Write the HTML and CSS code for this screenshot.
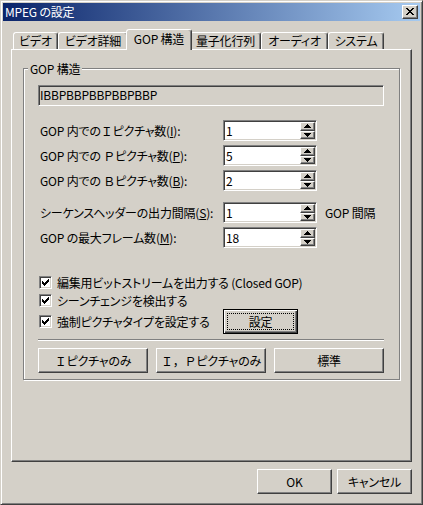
FILE: index.html
```html
<!DOCTYPE html>
<html lang="ja">
<head>
    <meta charset="UTF-8">
    <title>MPEG の設定</title>
    <link rel="stylesheet" href="styles.css">
</head>
<body>
<div class="window">
    <div class="titlebar">
        <span class="title">MPEG の設定</span>
        <span class="close-btn">
            <svg width="8" height="7" viewBox="0 0 8 7" shape-rendering="crispEdges"><path d="M0 0h2v1H0z M6 0h2v1H6z M1 1h2v1H1z M5 1h2v1H5z M2 2h4v1H2z M3 3h2v1H3z M2 4h4v1H2z M1 5h2v1H1z M5 5h2v1H5z M0 6h2v1H0z M6 6h2v1H6z"/></svg>
        </span>
    </div>

    <div class="client">
        <div class="tabs">
            <div class="tab tab-video">ビデオ</div>
            <div class="tab tab-detail">ビデオ詳細</div>
            <div class="tab tab-gop active">GOP 構造</div>
            <div class="tab tab-matrix">量子化行列</div>
            <div class="tab tab-audio">オーディオ</div>
            <div class="tab tab-system">システム</div>
        </div>

        <div class="panel">
            <fieldset class="group">
                <legend>GOP 構造</legend>
                <div class="readonly">IBBPBBPBBPBBPBBP</div>

                <div class="spin-rows">
                    <div class="spin-row">
                        <label>GOP 内での<span class="fw">Ｉ</span>ピクチャ数(<u>I</u>):</label>
                        <div class="spin">
                            <span class="spin-value">1</span>
                            <div class="spin-btns">
                                <span class="arrow"><svg width="7" height="4" viewBox="0 0 7 4" shape-rendering="crispEdges"><path d="M3 0h1v1h1v1h1v1h1v1H0V3h1V2h1V1h1z"/></svg></span>
                                <span class="arrow"><svg width="7" height="4" viewBox="0 0 7 4" shape-rendering="crispEdges"><path d="M0 0h7v1H6v1H5v1H4v1H3V3H2V2H1V1H0z"/></svg></span>
                            </div>
                        </div>
                    </div>
                    <div class="spin-row">
                        <label>GOP 内での <span class="fw">Ｐ</span>ピクチャ数(<u>P</u>):</label>
                        <div class="spin">
                            <span class="spin-value">5</span>
                            <div class="spin-btns">
                                <span class="arrow"><svg width="7" height="4" viewBox="0 0 7 4" shape-rendering="crispEdges"><path d="M3 0h1v1h1v1h1v1h1v1H0V3h1V2h1V1h1z"/></svg></span>
                                <span class="arrow"><svg width="7" height="4" viewBox="0 0 7 4" shape-rendering="crispEdges"><path d="M0 0h7v1H6v1H5v1H4v1H3V3H2V2H1V1H0z"/></svg></span>
                            </div>
                        </div>
                    </div>
                    <div class="spin-row">
                        <label>GOP 内での <span class="fw">Ｂ</span>ピクチャ数(<u>B</u>):</label>
                        <div class="spin">
                            <span class="spin-value">2</span>
                            <div class="spin-btns">
                                <span class="arrow"><svg width="7" height="4" viewBox="0 0 7 4" shape-rendering="crispEdges"><path d="M3 0h1v1h1v1h1v1h1v1H0V3h1V2h1V1h1z"/></svg></span>
                                <span class="arrow"><svg width="7" height="4" viewBox="0 0 7 4" shape-rendering="crispEdges"><path d="M0 0h7v1H6v1H5v1H4v1H3V3H2V2H1V1H0z"/></svg></span>
                            </div>
                        </div>
                    </div>
                </div>

                <div class="spin-rows spin-rows-lower">
                    <div class="spin-row">
                        <label>シーケンスヘッダーの出力間隔(<u>S</u>):</label>
                        <div class="spin">
                            <span class="spin-value">1</span>
                            <div class="spin-btns">
                                <span class="arrow"><svg width="7" height="4" viewBox="0 0 7 4" shape-rendering="crispEdges"><path d="M3 0h1v1h1v1h1v1h1v1H0V3h1V2h1V1h1z"/></svg></span>
                                <span class="arrow"><svg width="7" height="4" viewBox="0 0 7 4" shape-rendering="crispEdges"><path d="M0 0h7v1H6v1H5v1H4v1H3V3H2V2H1V1H0z"/></svg></span>
                            </div>
                        </div>
                        <span class="unit">GOP 間隔</span>
                    </div>
                    <div class="spin-row">
                        <label>GOP の最大フレーム数(<u>M</u>):</label>
                        <div class="spin">
                            <span class="spin-value">18</span>
                            <div class="spin-btns">
                                <span class="arrow"><svg width="7" height="4" viewBox="0 0 7 4" shape-rendering="crispEdges"><path d="M3 0h1v1h1v1h1v1h1v1H0V3h1V2h1V1h1z"/></svg></span>
                                <span class="arrow"><svg width="7" height="4" viewBox="0 0 7 4" shape-rendering="crispEdges"><path d="M0 0h7v1H6v1H5v1H4v1H3V3H2V2H1V1H0z"/></svg></span>
                            </div>
                        </div>
                    </div>
                </div>

                <div class="checks">
                    <div class="check-row">
                        <span class="checkbox"><svg width="7" height="7" viewBox="0 0 7 7" shape-rendering="crispEdges"><path d="M0 2H1V3H2V4H3V3H4V2H5V1H6V0H7V3H6V4H5V5H4V6H3V7H2V6H1V5H0Z"/></svg></span>
                        <span class="check-text">編集用ビットストリームを出力する (Closed GOP)</span>
                    </div>
                    <div class="check-row">
                        <span class="checkbox"><svg width="7" height="7" viewBox="0 0 7 7" shape-rendering="crispEdges"><path d="M0 2H1V3H2V4H3V3H4V2H5V1H6V0H7V3H6V4H5V5H4V6H3V7H2V6H1V5H0Z"/></svg></span>
                        <span class="check-text">シーンチェンジを検出する</span>
                    </div>
                    <div class="check-row check-row-btn">
                        <span class="checkbox"><svg width="7" height="7" viewBox="0 0 7 7" shape-rendering="crispEdges"><path d="M0 2H1V3H2V4H3V3H4V2H5V1H6V0H7V3H6V4H5V5H4V6H3V7H2V6H1V5H0Z"/></svg></span>
                        <span class="check-text">強制ピクチャタイプを設定する</span>
                        <button class="btn btn-default">設定</button>
                    </div>
                </div>

                <div class="separator"></div>

                <div class="preset-btns">
                    <button class="btn"><span class="fw">Ｉ</span>ピクチャのみ</button>
                    <button class="btn"><span class="fw">Ｉ，Ｐ</span>ピクチャのみ</button>
                    <button class="btn">標準</button>
                </div>
            </fieldset>
        </div>

        <div class="footer">
            <button class="btn btn-dialog">OK</button>
            <button class="btn btn-dialog">キャンセル</button>
        </div>
    </div>
</div>
</body>
</html>
```

FILE: styles.css
```css
/* Reset */
* {
  box-sizing: border-box;
  margin: 0;
  padding: 0;
}

body {
  font-family: "Noto Sans CJK JP", "Liberation Sans", sans-serif;
  font-size: 12px;
  font-feature-settings: "palt";
  letter-spacing: -0.2px;
  color: #000;
  background: #d4d0c8;
}

button {
  font: inherit;
  font-feature-settings: inherit;
  letter-spacing: inherit;
  color: inherit;
}

/* full-width latin keeps its full cell */
.fw {
  font-feature-settings: normal;
}

/* Window frame */
.window {
  width: 423px;
  height: 505px;
  background: #d4d0c8;
  border: 1px solid;
  border-color: #d4d0c8 #404040 #404040 #d4d0c8;
  box-shadow: inset 1px 1px #fff, inset -1px -1px #808080;
  padding: 2px;
  display: flex;
  flex-direction: column;
}

.titlebar {
  height: 18px;
  flex: none;
  background: linear-gradient(to right, #0a246a, #a6caf0);
  color: #fff;
  display: flex;
  align-items: center;
  justify-content: space-between;
  padding: 0 2px;
}

.title {
  line-height: 18px;
}

.close-btn {
  width: 16px;
  height: 14px;
  background: #d4d0c8;
  border: 1px solid;
  border-color: #fff #404040 #404040 #fff;
  box-shadow: inset -1px -1px #808080;
  display: flex;
  align-items: center;
  justify-content: center;
  padding: 0 1px 1px 0;
}

.client {
  flex: 1;
  padding: 8px 8px 0 8px;
}

/* Tabs */
.tabs {
  height: 20px;
  display: flex;
  align-items: flex-end;
  padding-left: 2px;
  position: relative;
  z-index: 1;
}

.tab {
  height: 17px;
  line-height: 16px;
  text-align: center;
  white-space: nowrap;
  background: #d4d0c8;
  border: 1px solid;
  border-bottom: none;
  border-color: #fff #404040 transparent #fff;
  border-radius: 3px 3px 0 0;
  box-shadow: inset -1px 0 #808080;
}

.tab-video { width: 45px; }
.tab-detail { width: 70px; }
.tab-gop { width: 62px; }
.tab-matrix { width: 71px; }
.tab-audio { width: 67px; }
.tab-system { width: 56px; }

.tab.active {
  width: 66px;
  height: 21px;
  margin: 0 -2px -1px;
  line-height: 17px;
  padding-bottom: 2px;
  position: relative;
  z-index: 2;
}

.panel {
  height: 413px;
  border: 1px solid;
  border-color: #fff #404040 #404040 #fff;
  box-shadow: inset -1px -1px #808080;
  padding: 12px 11px 0 11px;
}

/* Group box */
.group {
  border: 1px solid #808080;
  box-shadow: 1px 1px #fff, inset 1px 1px #fff;
  padding: 0 15px 6px 14px;
  display: flex;
  flex-direction: column;
}

.group legend {
  margin-left: -10px;
  padding: 0 2px;
  line-height: 13px;
  background: #d4d0c8;
}

.readonly {
  height: 21px;
  margin-top: 10px;
  line-height: 17px;
  padding-left: 1px;
  border: 1px solid;
  border-color: #808080 #fff #fff #808080;
  box-shadow: inset 1px 1px #404040, inset -1px -1px #d4d0c8;
  white-space: nowrap;
}

/* Spin rows */
.spin-rows {
  display: flex;
  flex-direction: column;
  gap: 4px;
  margin-top: 14px;
}

.spin-rows-lower {
  margin-top: 11px;
}

.spin-row {
  display: grid;
  grid-template-columns: 185px 94px auto;
  align-items: center;
  height: 21px;
}

.spin-row label {
  padding-left: 2px;
  white-space: nowrap;
}

.spin {
  height: 21px;
  display: flex;
  background: #fff;
  border: 1px solid;
  border-color: #808080 #fff #fff #808080;
  box-shadow: inset 1px 1px #404040, inset -1px -1px #d4d0c8;
  padding: 1px;
}

.spin-value {
  flex: 1;
  line-height: 17px;
  padding-left: 1px;
}

.spin-btns {
  width: 15px;
  display: flex;
  flex-direction: column;
}

.arrow {
  flex: 1;
  background: #d4d0c8;
  border: 1px solid;
  border-color: #fff #404040 #404040 #fff;
  box-shadow: inset -1px -1px #808080;
  display: flex;
  align-items: center;
  justify-content: center;
}

.arrow svg {
  display: block;
}

.unit {
  margin-left: 8px;
  white-space: nowrap;
}

/* Check boxes */
.checks {
  margin-top: 25px;
  display: flex;
  flex-direction: column;
}

.check-row {
  height: 18px;
  display: flex;
  align-items: center;
  padding-left: 1px;
}

.check-row-btn {
  height: 25px;
}

.checkbox {
  width: 13px;
  height: 13px;
  flex: none;
  background: #fff;
  border: 1px solid;
  border-color: #808080 #fff #fff #808080;
  box-shadow: inset 1px 1px #404040, inset -1px -1px #d4d0c8;
  padding: 2px 0 0 2px;
}

.checkbox svg {
  display: block;
}

.check-text {
  margin-left: 5px;
  white-space: nowrap;
}

.check-row-btn .check-text {
  width: 166px;
}

/* Buttons */
.btn {
  height: 25px;
  background: #d4d0c8;
  border: 1px solid;
  border-color: #fff #404040 #404040 #fff;
  box-shadow: inset -1px -1px #808080;
  text-align: center;
  white-space: nowrap;
}

.btn-default {
  width: 75px;
  border-color: #000;
  box-shadow: inset 1px 1px #fff, inset -1px -1px #404040, inset -2px -2px #808080;
  outline: 1px dotted #000;
  outline-offset: -5px;
}

.separator {
  margin-top: 5px;
  height: 2px;
  border-top: 1px solid #808080;
  border-bottom: 1px solid #fff;
}

.preset-btns {
  margin-top: 7px;
  display: grid;
  grid-template-columns: repeat(3, 1fr);
  gap: 8px;
}

.footer {
  margin-top: 7px;
  display: flex;
  justify-content: flex-end;
  gap: 5px;
}

.btn-dialog {
  width: 75px;
}
```
